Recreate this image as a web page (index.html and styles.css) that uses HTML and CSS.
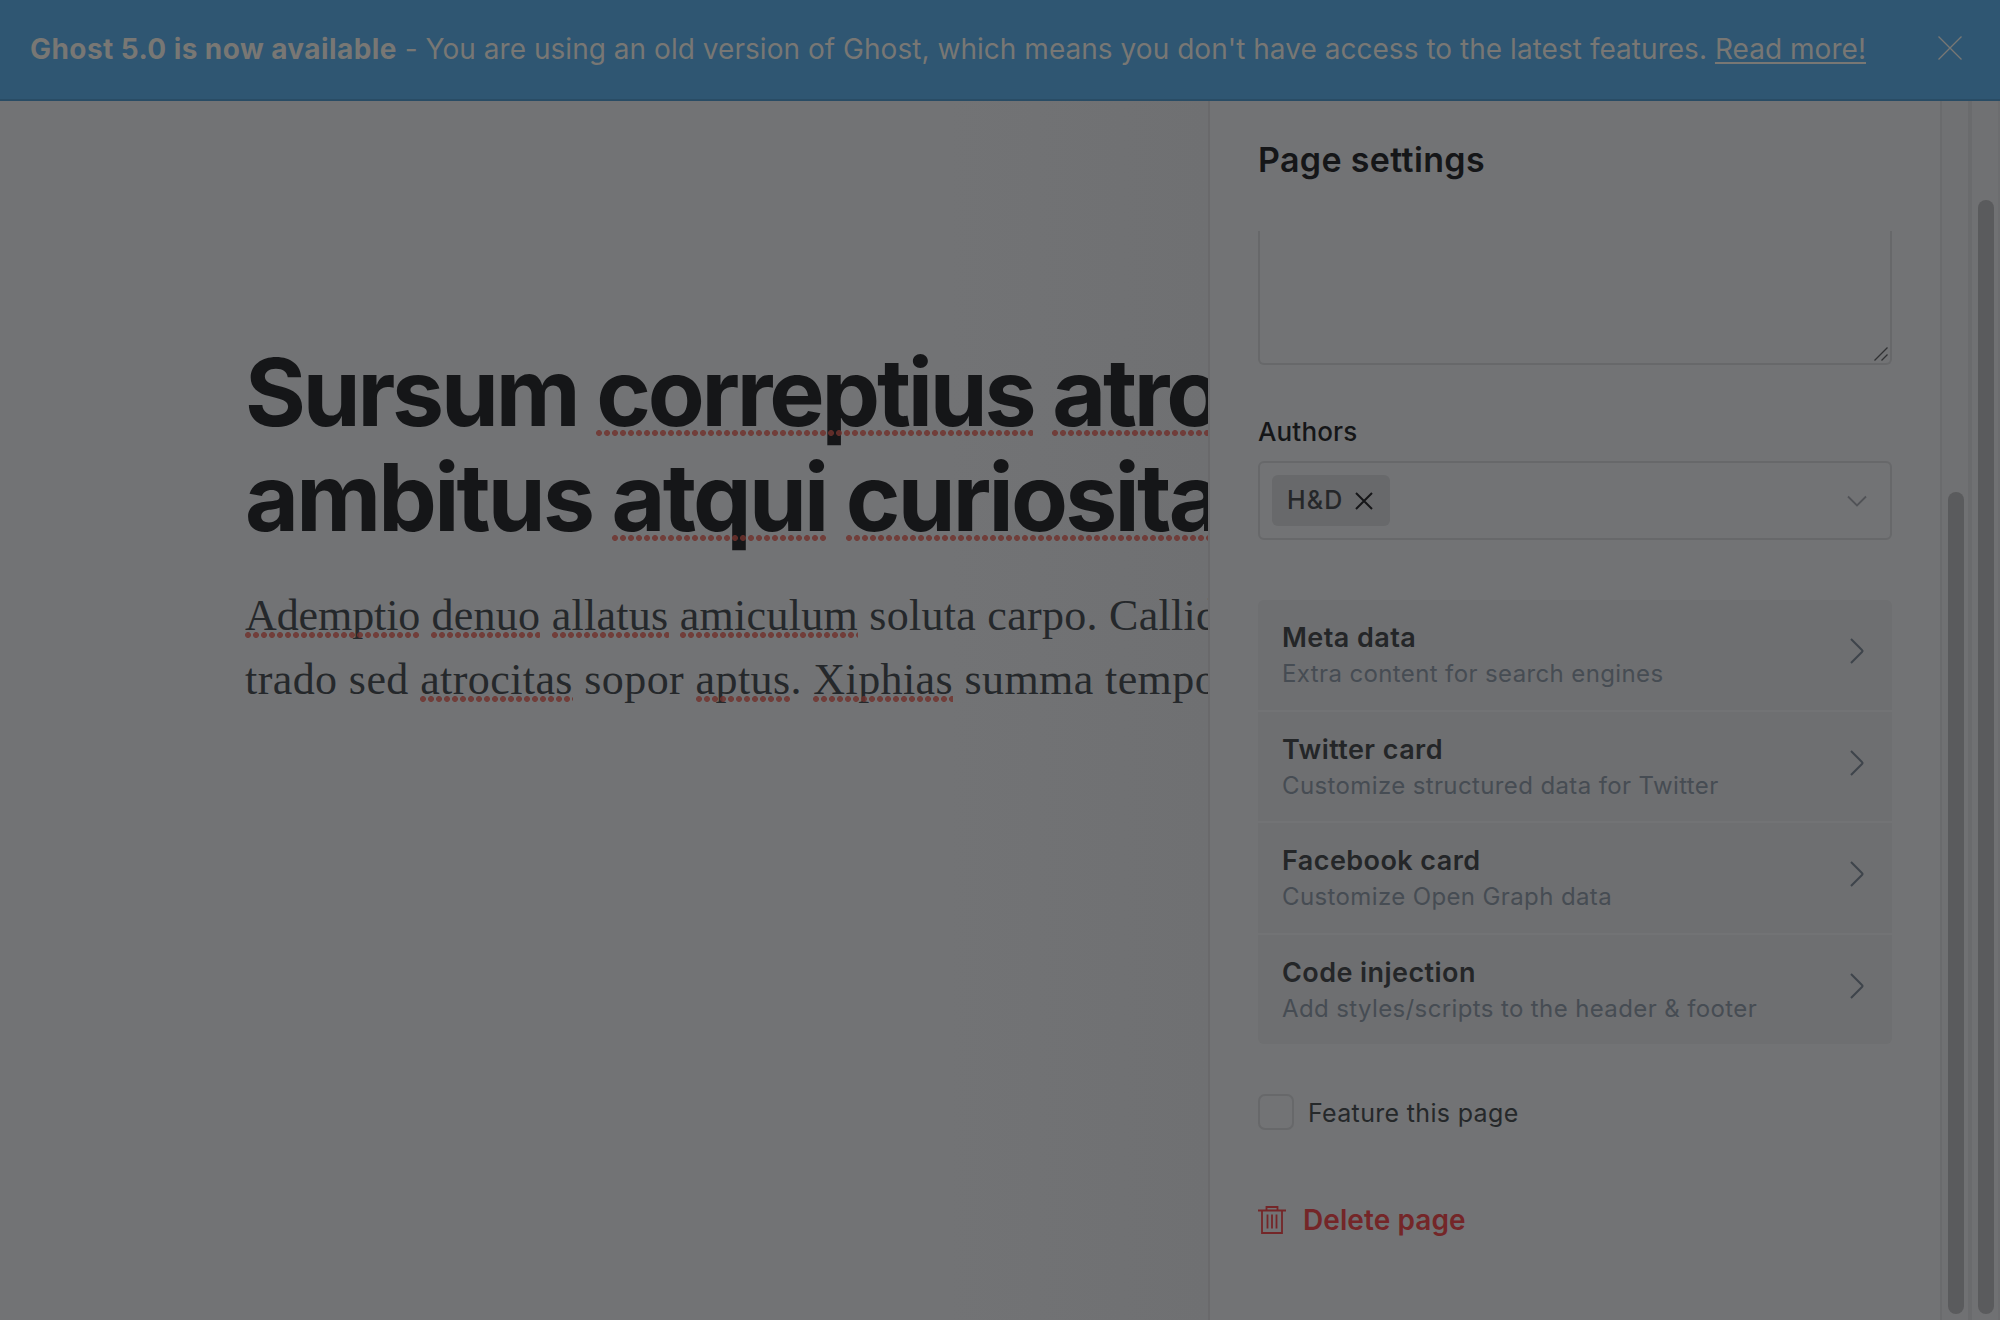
FILE: index.html
```html
<!DOCTYPE html>
<html lang="en">
<head>
<meta charset="utf-8">
<title>Page settings</title>
<link rel="stylesheet" href="styles.css">
</head>
<body>
<div class="app">
  <header class="banner">
    <p class="banner-text"><strong>Ghost 5.0 is now available</strong> - You are using an old version of Ghost, which means you don't have access to the latest features. <a class="banner-link">Read more!</a></p>
    <svg class="banner-close" viewBox="0 0 24 24"><path d="M.5.5l23 23M23.5.5l-23 23"/></svg>
  </header>
  <div class="workspace">
    <main class="editor">
      <h1 class="post-title">
        <span class="line title-first">Sursum <span class="sp">correptius</span> <span class="sp">atrocitas</span></span>
        <span class="line title-second">ambitus <span class="sp">atqui</span> <span class="sp">curiositas</span></span>
      </h1>
      <p class="post-body">
        <span class="line body-first"><span class="sp lead">Ademptio</span> <span class="sp">denuo</span> <span class="sp">allatus</span> <span class="sp">amiculum</span> soluta carpo. Callide</span>
        <span class="line body-second">trado sed <span class="sp">atrocitas</span> sopor <span class="sp">aptus</span>. <span class="sp">Xiphias</span> summa tempore</span>
      </p>
    </main>
    <aside class="panel">
      <h2 class="panel-title">Page settings</h2>
      <div class="textarea"><svg class="grip" viewBox="0 0 14 14"><path d="M.5 13.500L13.500.5M7.500 13.500l6-6"/></svg></div>
      <div class="label">Authors</div>
      <div class="select">
        <span class="tag"><span class="tag-name">H&amp;D</span><svg class="tag-x" viewBox="0 0 18 18"><path d="M1 1l16 16M17 1L1 17"/></svg></span>
        <svg class="select-arrow" viewBox="0 0 20 12"><path d="M1 1.500l9 9 9-9"/></svg>
      </div>
      <ul class="list">
        <li class="item"><div><b>Meta data</b><small>Extra content for search engines</small></div><svg class="chev" viewBox="0 0 14 26"><path d="M1 1l11.200 11.200a1.100 1.100 0 0 1 0 1.600L1 25"/></svg></li>
        <li class="item"><div><b>Twitter card</b><small>Customize structured data for Twitter</small></div><svg class="chev" viewBox="0 0 14 26"><path d="M1 1l11.200 11.200a1.100 1.100 0 0 1 0 1.600L1 25"/></svg></li>
        <li class="item"><div><b>Facebook card</b><small>Customize Open Graph data</small></div><svg class="chev" viewBox="0 0 14 26"><path d="M1 1l11.200 11.200a1.100 1.100 0 0 1 0 1.600L1 25"/></svg></li>
        <li class="item"><div><b>Code injection</b><small>Add styles/scripts to the header &amp; footer</small></div><svg class="chev" viewBox="0 0 14 26"><path d="M1 1l11.200 11.200a1.100 1.100 0 0 1 0 1.600L1 25"/></svg></li>
      </ul>
      <div class="feature"><span class="box"></span><span class="feature-label">Feature this page</span></div>
      <div class="delete"><svg class="trash" viewBox="0 0 28 28"><path d="M0 4.500h28M8.500 4V1h11v3M4 5v22h20V5M9.500 8.500v14M14 8.500v14M18.500 8.500v14"/></svg><span>Delete page</span></div>
    </aside>
    <div class="track inner"><div class="thumb"></div></div>
    <div class="track outer"><div class="thumb"></div></div>
  </div>
</div>
</body>
</html>
```

FILE: styles.css
```css
* { box-sizing: border-box; }
body {
  margin: 0;
  background: #727375;
  font-family: Inter, "Liberation Sans", sans-serif;
  color: #151618;
}
.app { display: flex; flex-direction: column; width: 2000px; height: 1320px; overflow: hidden; }
svg { display: block; fill: none; flex: none; }

.banner {
  flex: none;
  display: flex;
  justify-content: space-between;
  align-items: flex-start;
  height: 101px;
  padding: 32px 38px 0 30px;
  background: #2f5672;
  border-bottom: 2px solid #294c65;
  color: #787774;
}
.banner-text { margin: 0; font-size: 28px; line-height: 34px; letter-spacing: .035px; white-space: pre; }
.banner-text strong { font-weight: 700; letter-spacing: .42px; }
.banner-link { text-decoration: underline; text-decoration-thickness: 2px; text-underline-offset: 3px; }
.banner-close { width: 24px; height: 24px; margin-top: 4px; stroke: #787774; stroke-width: 1.3; }

.workspace { flex: 1; display: flex; min-height: 0; }
.editor {
  width: 1208px;
  overflow: hidden;
  padding: 239px 0 0 245px;
  background: linear-gradient(90deg, #727375 950px, #6f7072 1208px);
}
.line { display: block; white-space: nowrap; }
.post-title { margin: 0; font-size: 93px; line-height: 105px; font-weight: 700; }
.title-first { letter-spacing: -3.2px; }
.title-second { letter-spacing: -2.780px; }
.post-body { margin: 34px 0 0; font-family: "Liberation Serif", serif; font-size: 44px; line-height: 64px; color: #25282b; }
.body-first { letter-spacing: .28px; }
.body-second { letter-spacing: .41px; }
.lead { letter-spacing: -.1px; }
.sp { position: relative; }
.sp::after {
  content: "";
  position: absolute;
  left: 0;
  right: 0;
  bottom: 2px;
  height: 6px;
  background: radial-gradient(circle at 3px 3px, rgba(112, 50, 45, .82) 2.600px, transparent 3.300px) 0 0 / 8px 6px repeat-x;
}
.post-title .sp::after { bottom: 12px; }

.panel { width: 732px; padding: 0 48px; border-left: 2px solid #69696b; }
.panel-title { margin: 38px 0 51px; font-size: 34px; line-height: 41px; font-weight: 600; letter-spacing: .35px; }
.textarea {
  display: flex;
  justify-content: flex-end;
  align-items: flex-end;
  height: 134px;
  padding: 2px;
  border: 2px solid #67686a;
  border-top: 0;
  border-radius: 0 0 6px 6px;
}
.grip { width: 14px; height: 14px; stroke: #303133; stroke-width: 1.300; }
.label { margin: 51px 0 13px; font-size: 26px; line-height: 32px; font-weight: 500; letter-spacing: .15px; }
.select {
  display: flex;
  justify-content: space-between;
  align-items: center;
  height: 79px;
  padding: 0 23px 0 12px;
  border: 2px solid #67686a;
  border-radius: 6px;
}
.tag {
  display: flex;
  align-items: center;
  gap: 11px;
  width: 118px;
  height: 51px;
  padding-left: 15px;
  border-radius: 6px;
  background: #68696b;
  color: #252729;
  font-size: 25px;
  font-weight: 500;
}
.tag-name { line-height: 30px; padding-bottom: 2px; letter-spacing: 1.200px; }
.tag-x { width: 18px; height: 18px; stroke: #151618; stroke-width: 2; }
.select-arrow { width: 20px; height: 12px; stroke: #515357; stroke-width: 1.800; }

.list { display: flex; flex-direction: column; gap: 2px; margin: 60px 0 50px; padding: 0; list-style: none; height: 444px; border-radius: 6px; overflow: hidden; }
.item { flex: 1; display: flex; justify-content: space-between; align-items: flex-start; padding: 21px 28px 0 24px; background: #6e6f71; }
.item b { display: block; font-size: 27px; line-height: 34px; font-weight: 600; letter-spacing: .43px; color: #242628; }
.item small { display: block; margin-top: 4px; font-size: 24px; line-height: 30px; letter-spacing: .38px; color: #464c53; }
.chev { width: 14px; height: 26px; margin-top: 17px; stroke: #3e444b; stroke-width: 2; }

.feature { display: flex; align-items: center; gap: 14px; height: 36px; font-size: 25px; letter-spacing: .33px; color: #25282a; }
.feature-label { padding-top: 2px; }
.box { width: 36px; height: 36px; border: 2px solid #67686a; border-radius: 7px; }
.delete { display: flex; align-items: center; gap: 17px; margin-top: 73px; height: 34px; font-size: 28px; font-weight: 600; letter-spacing: .08px; color: #742628; }
.trash { width: 28px; height: 28px; stroke: #742628; stroke-width: 1.800; }

.track { display: flex; justify-content: center; background: #707173; padding-bottom: 6px; padding-left: 2px; }
.inner { width: 28px; padding-top: 391px; border-left: 2px solid #6a6b6d; }
.outer { width: 32px; padding-top: 99px; border-left: 4px solid #6a6b6d; border-right: 2px solid #6c6d6f; }
.thumb { width: 16px; border-radius: 8px; background: #5a5b5d; }
```
